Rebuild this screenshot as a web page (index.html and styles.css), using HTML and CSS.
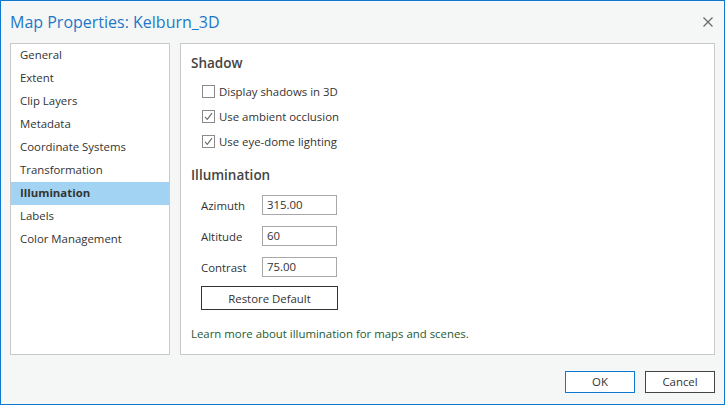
FILE: index.html
```html
<!DOCTYPE html>
<html>
<head>
<meta charset="utf-8">
<link rel="stylesheet" href="styles.css">
</head>
<body>
<div class="window">
  <div class="titlebar">
    <div class="title">Map Properties: Kelburn_3D</div>
    <svg class="close" width="12" height="12" viewBox="0 0 12 12"><path d="M1.5 1.5 L10.5 10.5 M10.5 1.5 L1.5 10.5" stroke="#6a6a6a" stroke-width="1.3" fill="none"/></svg>
  </div>
  <div class="main">
    <div class="nav">
      <div class="nav-item">General</div>
      <div class="nav-item">Extent</div>
      <div class="nav-item">Clip Layers</div>
      <div class="nav-item">Metadata</div>
      <div class="nav-item">Coordinate Systems</div>
      <div class="nav-item">Transformation</div>
      <div class="nav-item selected">Illumination</div>
      <div class="nav-item">Labels</div>
      <div class="nav-item">Color Management</div>
    </div>
    <div class="content">
      <div class="heading">Shadow</div>
      <div class="checks">
        <div class="check-row"><span class="box"></span><span>Display shadows in 3D</span></div>
        <div class="check-row"><span class="box"><svg width="11" height="11" viewBox="0 0 11 11"><path d="M2 5.8 L4.3 8.3 L9 2.2" stroke="#6b6b6b" stroke-width="1.1" fill="none"/></svg></span><span>Use ambient occlusion</span></div>
        <div class="check-row"><span class="box"><svg width="11" height="11" viewBox="0 0 11 11"><path d="M2 5.8 L4.3 8.3 L9 2.2" stroke="#6b6b6b" stroke-width="1.1" fill="none"/></svg></span><span>Use eye-dome lighting</span></div>
      </div>
      <div class="heading heading2">Illumination</div>
      <div class="fields">
        <div class="field"><span class="label">Azimuth</span><span class="input">315.00</span></div>
        <div class="field"><span class="label">Altitude</span><span class="input">60</span></div>
        <div class="field"><span class="label">Contrast</span><span class="input">75.00</span></div>
      </div>
      <div class="restore">Restore Default</div>
      <div class="learn">Learn more about illumination for maps and scenes.</div>
    </div>
  </div>
  <div class="footer">
    <div class="btn ok">OK</div>
    <div class="btn">Cancel</div>
  </div>
</div>
</body>
</html>
```
FILE: styles.css
```css
* { box-sizing: border-box; }
html, body { margin: 0; padding: 0; }
body {
  font-family: "Open Sans", "Noto Sans", sans-serif;
  font-size: 11.4px;
  color: #333;
}
.window {
  width: 725px;
  height: 405px;
  border: 1px solid #0c78d0;
  background: #f5f7f7;
  display: flex;
  flex-direction: column;
}
.titlebar {
  height: 42px;
  display: flex;
  align-items: center;
  justify-content: space-between;
  padding: 0 10px 0 9px;
}
.title {
  font-size: 16px;
  color: #1f78c6;
  margin-top: -1px;
}
.main {
  display: flex;
  gap: 10px;
  padding: 0 9px;
  height: 312px;
}
.nav {
  width: 160px;
  background: #fff;
  border: 1px solid #c9c9c9;
}
.nav-item {
  height: 23px;
  line-height: 22px;
  padding-left: 9px;
  white-space: nowrap;
}
.nav-item.selected {
  background: #a3d3f2;
  font-weight: 700;
}
.content {
  flex: 1;
  background: #fff;
  border: 1px solid #c9c9c9;
  padding: 9px 10px;
}
.heading {
  font-size: 13.5px;
  font-weight: 600;
  color: #444;
  line-height: 20px;
}
.checks { margin-top: 6px; padding-left: 11px; }
.check-row {
  height: 25px;
  display: flex;
  align-items: center;
  gap: 4px;
}
.box {
  width: 13px;
  height: 13px;
  border: 1px solid #8a8a8a;
  background: #fff;
  display: flex;
  align-items: center;
  justify-content: center;
}
.heading2 { margin-top: 11px; }
.fields {
  margin-top: 10px;
  padding-left: 10px;
  display: flex;
  flex-direction: column;
  gap: 11px;
}
.field {
  display: flex;
  align-items: center;
  height: 20px;
}
.label { width: 61px; }
.input {
  width: 75px;
  height: 20px;
  border: 1px solid #a8a8a8;
  background: #fff;
  padding-left: 4px;
  line-height: 18px;
}
.restore {
  margin: 9px 0 0 10px;
  width: 137px;
  height: 24px;
  border: 1px solid #333;
  display: flex;
  align-items: center;
  justify-content: center;
}
.learn {
  margin-top: 16px;
  line-height: 16px;
  color: #1e5a30;
}
.footer {
  flex: 1;
  display: flex;
  justify-content: flex-end;
  align-items: center;
  gap: 10px;
  padding: 4px 9px 0 0;
}
.btn {
  width: 70px;
  height: 22px;
  border: 1px solid #444;
  background: #fff;
  display: flex;
  align-items: center;
  justify-content: center;
}
.btn.ok { border-color: #0c78d0; }
```
